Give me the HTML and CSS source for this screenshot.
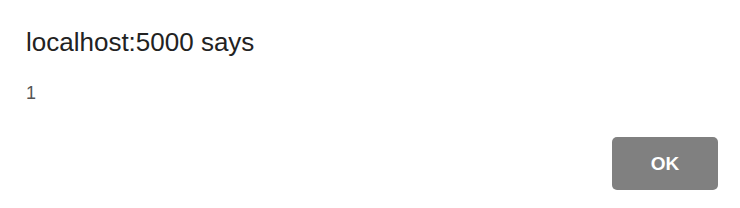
FILE: index.html
```html
<!DOCTYPE html>
<html>
    <head>
        <meta charset="utf-8" />
        <title>localhost:5000 says</title>
        <link rel="stylesheet" href="styles.css">
    </head>
    <body>
        <div class="dialog">
            <div class="dialog-title">localhost:5000 says</div>
            <div class="dialog-message">1</div>
            <div class="dialog-buttons">
                <button class="btn-ok">OK</button>
            </div>
        </div>
    </body>
</html>
```

FILE: styles.css
```css
html, body { margin: 0; padding: 0; width: 100%; height: 100%; overflow: hidden; background: #fff }

.dialog {
    font-family: 'Liberation Sans', Arial, sans-serif;
    padding: 27px 22px 18px 26px;
    display: flex;
    flex-direction: column;
}

.dialog-title {
    font-size: 26px;
    line-height: 30px;
    color: #222;
}

.dialog-message {
    margin-top: 25px;
    font-size: 18px;
    line-height: 22px;
    color: #555;
}

.dialog-buttons {
    margin-top: 33px;
    display: flex;
    justify-content: flex-end;
}

.btn-ok {
    width: 106px;
    height: 53px;
    border: none;
    border-radius: 5px;
    background-color: #808080;
    color: #fff;
    font-family: 'Liberation Sans', Arial, sans-serif;
    font-weight: bold;
    font-size: 19px;
    padding: 0;
    cursor: pointer;
}
```
